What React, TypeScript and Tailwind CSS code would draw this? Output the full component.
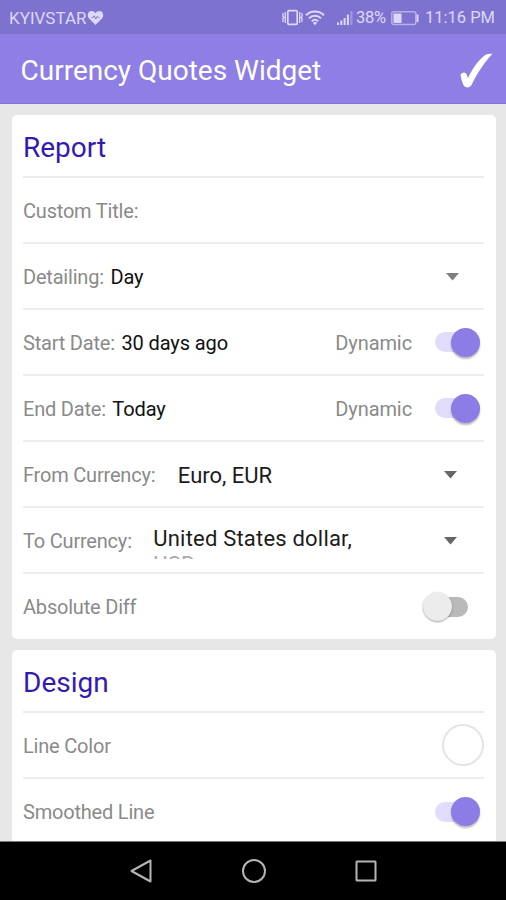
import type { ReactNode } from "react";
import clsx from "clsx";

function StatusBar() {
  return (
    <div className="flex h-[34px] shrink-0 items-center bg-[#7e72d1] pt-px pr-[11px] pl-[9px] text-[#dcd8f7]">
      <span className="text-[17px] leading-5">KYIVSTAR</span>
      <svg className="ml-px h-4 w-[17px]" viewBox="0 0 17 16">
        <path
          d="M8.5 15 1.8 8.2C-.3 5.8.8 1 4.7 1c1.6 0 2.9.8 3.8 2.2C9.4 1.8 10.7 1 12.3 1c3.9 0 5 4.8 2.9 7.2z"
          fill="currentColor"
        />
        <path d="M4.500 7.500h1.500l1.200-1.800 1.500 3.300 1.500-2.600.8 1.100h1.500" fill="none" stroke="#7e72d1" strokeWidth="0.900" />
      </svg>

      <svg className="ml-auto h-[17px] w-[21px]" viewBox="0 0 21 17" fill="none" stroke="currentColor">
        <rect x="5.800" y="1.700" width="9.400" height="13.600" rx="1" strokeWidth="1.700" />
        <path d="M1 4v3.500l1 1-1 1V13M3.300 3v11M17.700 3v11M20 4v3.500l-1 1 1 1V13" strokeWidth="1.300" />
      </svg>
      <svg className="mr-px ml-[2px] h-[17px] w-[20px]" viewBox="0 0 20 17" fill="none" stroke="currentColor" strokeWidth="2">
        <path d="M1 6.200c5-5 13-5 18 0M4 9.300c3.400-3.400 8.600-3.400 12 0M6.800 12.200c1.900-1.800 4.500-1.800 6.400 0" />
        <path d="m10 16.200-2.200-2.400c1.200-1 3.200-1 4.400 0z" fill="currentColor" stroke="none" />
      </svg>
      <svg className="ml-[11px] h-4 w-4" viewBox="0 0 16 16" fill="currentColor">
        <path d="M0 12.500h2V15H0zM3.300 10.500h2V15h-2zM6.600 8h2v7h-2zM9.900 4.500h2V15h-2z" />
        <path d="M13.200 1h2.300v14h-2.300z" opacity="0.350" />
      </svg>
      <span className="ml-[3px] w-[31px] text-[16.5px] leading-5 tracking-[-0.300px]">38%</span>
      <svg className="ml-[3px] h-4 w-[30px]" viewBox="0 0 30 16">
        <rect x="1.800" y="1.800" width="24" height="12.800" rx="2" fill="none" stroke="currentColor" strokeWidth="1.500" opacity="0.600" />
        <path d="M3.500 3.500h8v9.400h-8z" fill="currentColor" />
        <path d="M26.500 4.500h2v7.400h-2z" fill="currentColor" />
      </svg>
      <span className="ml-[5px] w-[70px] text-right text-[16.5px] leading-5 whitespace-nowrap">11:16 PM</span>
    </div>
  );
}

function AppBar() {
  return (
    <div className="flex h-[70px] shrink-0 items-center justify-between border-b border-[#8174d6] bg-[#8e7ee6] pr-[13px] pl-[20.500px] text-white">
      <h1 className="mt-1 text-[28px] leading-8 whitespace-nowrap">Currency Quotes Widget</h1>
      <svg className="mt-[5px] h-[36px] w-[34px]" viewBox="0 0 34 36">
        <path
          d="M1.500 22c1-2.600 3.600-3.200 5.400-1.800 1 1.300 1.500 3 2 4.800C14 14.500 20.500 5.500 27 1.500 29 .6 31.500.6 33.500.8 26 8.500 18.500 20 12.500 32c-1.500 2.900-6 3.200-7.800.6C3.300 29.500 2.200 26 1.500 22z"
          fill="currentColor"
        />
      </svg>
    </div>
  );
}

function Card({ title, className, children }: { title: string; className?: string; children: ReactNode }) {
  return (
    <section className={clsx("mr-[10px] ml-[11.500px] rounded-[5px] bg-white pr-3 pl-[11.500px]", className)}>
      <h2 className="flex h-[63px] items-center border-b-2 border-[#ebebeb] pt-[4px] text-[28px] text-[#341bb0]">
        {title}
      </h2>
      {children}
    </section>
  );
}

type RowProps = {
  label: string;
  value?: string;
  last?: boolean;
  children?: ReactNode;
};

function Row({ label, value, last, children }: RowProps) {
  return (
    <div
      className={clsx(
        "flex items-center text-[20px] whitespace-nowrap",
        last ? "h-[65px]" : "h-[66px] border-b-2 border-[#ededed]"
      )}
    >
      <span className={clsx("tracking-[-0.200px] text-[#8a8a8a]", !last && "mt-[2px]")}>{label}</span>
      {value && <span className="mt-[2px] ml-[6.500px] tracking-[-0.100px] text-[#111]">{value}</span>}
      {children}
    </div>
  );
}

function Toggle({ on }: { on?: boolean }) {
  return (
    <div
      className={clsx(
        "flex h-[20px] items-center rounded-full",
        on ? "mr-[4px] w-[45px] justify-end bg-[#e1dcfa]" : "mr-[16px] ml-auto w-[45px] justify-start bg-[#b9b9b9]"
      )}
    >
      <span
        className={clsx(
          "size-[29px] shrink-0 rounded-full",
          on ? "bg-[#8c7de6] shadow-[0_2px_2px_rgba(0,0,0,0.28)]" : "bg-[#ececec] shadow-[0_1px_2px_rgba(0,0,0,0.35)]"
        )}
      />
    </div>
  );
}

function Caret({ className }: { className?: string }) {
  return (
    <svg className={clsx("mt-[2px] ml-auto h-[8px] w-[13px]", className)} viewBox="0 0 13 8">
      <path d="M0 0h13L6.500 7.500z" fill="currentColor" />
    </svg>
  );
}

function DynamicToggle() {
  return (
    <>
      <span className="mt-[2px] mr-[23px] ml-auto tracking-[-0.100px] text-[#8a8a8a]">Dynamic</span>
      <Toggle on />
    </>
  );
}

function NavBar() {
  return (
    <div className="flex h-[59px] shrink-0 items-center justify-center gap-[88px] border-t border-[#777] bg-black pb-px pl-px text-[#b5b5b5]">
      <svg className="size-6" viewBox="0 0 24 24" fill="none" stroke="currentColor" strokeWidth="2" strokeLinejoin="round">
        <path d="M20.500 1.500v21L1.500 12z" />
      </svg>
      <svg className="size-6" viewBox="0 0 24 24" fill="none" stroke="currentColor" strokeWidth="2">
        <circle cx="12" cy="12" r="11" />
      </svg>
      <svg className="size-6" viewBox="0 0 24 24" fill="none" stroke="currentColor" strokeWidth="2">
        <rect x="2.500" y="2.500" width="19" height="19" rx="0.500" />
      </svg>
    </div>
  );
}

export default function App() {
  return (
    <div className="flex h-[900px] w-[506px] flex-col overflow-hidden bg-[#e7e7e7] font-[Roboto,sans-serif]">
      <StatusBar />
      <AppBar />
      <main className="min-h-0 flex-1 overflow-hidden pt-[11px]">
        <Card title="Report" className="h-[524px]">
          <Row label="Custom Title:" />
          <Row label="Detailing:" value="Day">
            <Caret className="mr-[25px] text-[#7f7f7f]" />
          </Row>
          <Row label="Start Date:" value="30 days ago">
            <DynamicToggle />
          </Row>
          <Row label="End Date:" value="Today">
            <DynamicToggle />
          </Row>
          <Row label="From Currency:">
            <span className="mt-[2px] ml-[22.500px] text-[22px] text-[#1c1c1c]">Euro, EUR</span>
            <Caret className="mr-[27px] text-[#666]" />
          </Row>
          <Row label="To Currency:">
            {/* fixed height cuts the wrapped second line */}
            <span className="mt-[4px] ml-[21.500px] h-[33px] w-[215px] overflow-hidden text-[22px] leading-[26px] tracking-[0.200px] whitespace-normal text-[#1c1c1c]">
              United States dollar, <span className="text-[#aaa]">USD</span>
            </span>
            <Caret className="mr-[27px] text-[#666]" />
          </Row>
          <Row label="Absolute Diff" last>
            <Toggle />
          </Row>
        </Card>
        <Card title="Design" className="mt-[11px] h-[220px]">
          <Row label="Line Color">
            <span className="ml-auto size-[42px] rounded-full border-2 border-[#e4e4e4]" />
          </Row>
          <Row label="Smoothed Line" last>
            <span className="ml-auto" />
            <Toggle on />
          </Row>
        </Card>
      </main>
      <NavBar />
    </div>
  );
}
